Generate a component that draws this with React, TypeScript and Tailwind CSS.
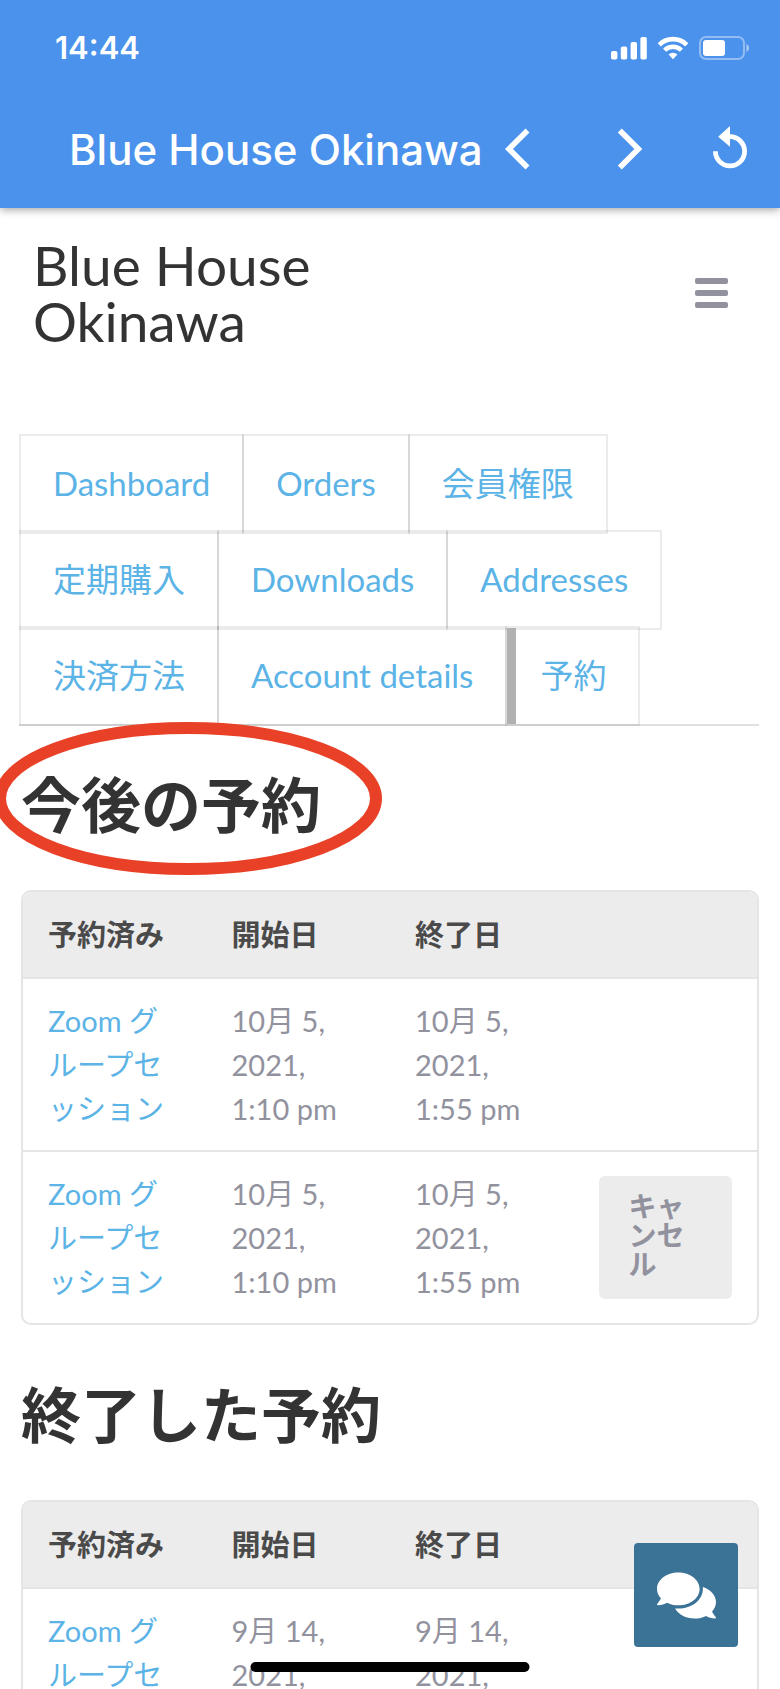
import { ReactNode } from "react"
import { FaComments } from "react-icons/fa"

interface Booking {
  name: string,
  start: string,
  end: string,
  cancellable?: boolean
}

const tabs = ["Dashboard", "Orders", "会員権限", "定期購入", "Downloads", "Addresses", "決済方法", "Account details", "予約"]

const upcoming: Booking[] = [
  { name: "Zoom グループセッション", start: "10月 5, 2021, 1:10 pm", end: "10月 5, 2021, 1:55 pm" },
  { name: "Zoom グループセッション", start: "10月 5, 2021, 1:10 pm", end: "10月 5, 2021, 1:55 pm", cancellable: true },
]

const past: Booking[] = [
  { name: "Zoom グループセッション", start: "9月 14, 2021, 1:10 pm", end: "9月 14, 2021, 1:55 pm" },
]

function StatusBar(){
  return(
    <div className="flex h-24 items-center justify-between pl-[55px] pr-[29px]">
      <span className="text-[31px] font-semibold leading-10">14:44</span>
      <div className="flex items-center gap-[10px]">
        <svg width="36" height="24" viewBox="0 0 36 24" fill="currentColor" aria-hidden="true">
          <rect x="0" y="15" width="6.4" height="8.5" rx="1.8"/>
          <rect x="9.8" y="10.5" width="6.4" height="13" rx="1.8"/>
          <rect x="19.6" y="6" width="6.4" height="17.5" rx="1.8"/>
          <rect x="29.4" y="1" width="6.4" height="22.5" rx="1.8"/>
        </svg>
        <svg width="32" height="24" viewBox="0 0 32 24" fill="none" stroke="currentColor" aria-hidden="true">
          <path d="M2.3 8.8a19.4 19.4 0 0 1 27.4 0" strokeWidth="4.6"/>
          <path d="M7.6 14.2a11.9 11.9 0 0 1 16.8 0" strokeWidth="4.4"/>
          <path d="M16 23.2l-4.4-4.6a6.2 6.2 0 0 1 8.8 0z" fill="currentColor" stroke="none"/>
        </svg>
        <svg width="52" height="24" viewBox="0 0 52 24" aria-hidden="true">
          <rect x="1" y="1" width="44" height="22" rx="6" fill="none" stroke="#fff" strokeOpacity=".4" strokeWidth="2"/>
          <rect x="4" y="4" width="22" height="16" rx="3" fill="#fff"/>
          <path d="M47.4 8c3.6 1.4 3.6 6.6 0 8z" fill="#fff" fillOpacity=".5"/>
        </svg>
      </div>
    </div>
  )
}

function NavIcon({d, width}: {d: string, width: number}){
  return(
    <svg width="50" height="50" viewBox="0 0 24 24" fill="none" stroke="currentColor" strokeWidth={width} aria-hidden="true">
      <path d={d}/>
    </svg>
  )
}

function AppBar(){
  return(
    <header className="relative z-10 shrink-0 bg-[#4a92ec] pb-1.5 text-white shadow-[0_2px_8px_rgba(0,0,0,0.35)] font-[Inter,'Noto_Sans_CJK_JP',sans-serif]">
      <StatusBar/>
      <div className="flex h-[106px] items-center justify-between pl-[69px] pr-[25px]">
        <h1 className="whitespace-nowrap text-[42px] font-medium">Blue House Okinawa</h1>
        <div className="flex shrink-0 gap-[50px]">
          <button aria-label="Back"><NavIcon d="M10.8 3.100L1.9 12l8.900 8.900" width={2.7}/></button>
          <button aria-label="Forward"><NavIcon d="M7.100 3.100L16 12l-8.900 8.900" width={2.7}/></button>
          <button aria-label="Reload">
            <svg width="50" height="50" viewBox="0 0 24 24" fill="currentColor" aria-hidden="true">
              <path d="M12 .9L6.3 6.100 12 10.900z"/>
              <path d="M12 6.100a7 7 0 1 1-7 7" fill="none" stroke="currentColor" strokeWidth="2.3"/>
            </svg>
          </button>
        </div>
      </div>
    </header>
  )
}

function AccountTabs(){
  return(
    <nav className="ml-[-2px] border-b-2 border-black/12">
      <ul className="-mb-0.5 flex flex-wrap pt-1">
        {tabs.map((tab,i)=>(
          <li key={tab} className="-mr-0.5 -mt-1">
            <a href="#" className={i === tabs.length - 1
              ? "flex h-[100px] items-center border-2 border-black/8 pr-8 before:mr-6 before:w-[9px] before:self-stretch before:bg-[#b1b1b1]"
              : "flex h-[100px] items-center border-2 border-black/8 px-8"}>{tab}</a>
          </li>
        ))}
      </ul>
    </nav>
  )
}

function Cell({children}: {children?: ReactNode}){
  return <td className="border-t-2 border-[#e5e5e5] px-[25px] pb-[19px] pt-5 align-top">{children}</td>
}

function BookingTable({bookings}: {bookings: Booking[]}){
  return(
    <div className="overflow-hidden rounded-[10px] border-2 border-[#e5e5e5]">
      <table className="w-full table-fixed border-separate border-spacing-0 text-left text-[29px] leading-[44px]">
        <thead className="bg-[#ececec] text-[#4a4a4a]">
          <tr className="h-[85px]">
            <th className="px-[25px]">予約済み</th>
            <th className="px-[25px]">開始日</th>
            <th className="px-[25px]">終了日</th>
            <td></td>
          </tr>
        </thead>
        <tbody>
          {bookings.map((booking,i)=>(
            <tr key={i}>
              <Cell><a href="#" className="text-[#5bb3e6]">{booking.name}</a></Cell>
              <Cell>{booking.start}</Cell>
              <Cell>{booking.end}</Cell>
              <td className="border-t-2 border-[#e5e5e5] px-[25px] align-middle">
                {booking.cancellable &&
                  <button className="block w-full rounded-md bg-[#ececec] px-[30px] pb-5 pt-4 text-left text-[28px] font-bold leading-[29px]">キャンセル</button>
                }
              </td>
            </tr>
          ))}
        </tbody>
      </table>
    </div>
  )
}

export default function App(){
  return(
    <div className="relative flex h-screen flex-col overflow-hidden bg-white text-[#92929e] font-[Lato,'Noto_Sans_CJK_JP',sans-serif]">
      <AppBar/>

      <main className="flex-1 overflow-hidden px-[21px]">
        <div className="flex items-center justify-between pl-3 pr-[31px] pt-[29px]">
          <h2 className="max-w-[340px] text-[55px] leading-[56px] text-[#333]">Blue House Okinawa</h2>
          <button aria-label="Menu" className="flex flex-col gap-1.5">
            <span className="h-1.5 w-[33px] rounded-xs bg-current"></span>
            <span className="h-1.5 w-[33px] rounded-xs bg-current"></span>
            <span className="h-1.5 w-[33px] rounded-xs bg-current"></span>
          </button>
        </div>

        <div className="mt-[85px] text-[33px] text-[#5bb3e6]">
          <AccountTabs/>
        </div>

        <section className="mt-[43px]">
          <div className="relative w-fit">
            <h2 className="text-[60px] font-bold leading-[72px] text-[#333]">今後の予約</h2>
            <svg className="absolute -left-[27px] -top-[47px]" width="388" height="153" viewBox="0 0 388 153" fill="none" aria-hidden="true">
              <ellipse cx="194" cy="76.5" rx="188" ry="70.5" stroke="#e94127" strokeWidth="12"/>
            </svg>
          </div>
          <div className="mt-[49px]">
            <BookingTable bookings={upcoming}/>
          </div>
        </section>

        <section className="mt-[54px]">
          <h2 className="text-[60px] font-bold leading-[72px] text-[#333]">終了した予約</h2>
          <div className="mt-[49px]">
            <BookingTable bookings={past}/>
          </div>
        </section>
      </main>

      <button aria-label="Chat" className="absolute bottom-[42px] right-[42px] flex size-[104px] items-center justify-center rounded bg-[#3b7396] text-white">
        <FaComments className="h-[53px] w-[59px]"/>
      </button>
      <div className="absolute bottom-[17px] left-1/2 h-2.5 w-[279px] -translate-x-1/2 rounded-full bg-black"></div>
    </div>
  )
}
